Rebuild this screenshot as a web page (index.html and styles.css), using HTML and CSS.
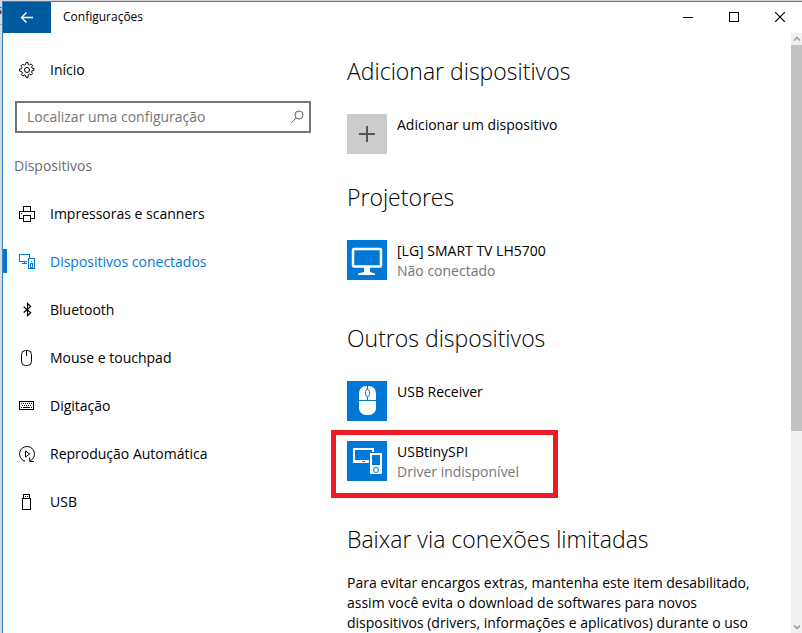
FILE: index.html
```html
<!DOCTYPE html>
<html lang="pt-BR">
<head>
    <meta charset="UTF-8">
    <meta name="viewport" content="width=device-width, initial-scale=1.0">
    <title>Configurações</title>
    <link rel="stylesheet" href="styles.css">
</head>
<body>
    <div class="behind" aria-hidden="true"><span>s</span></div>
    <div class="window">
        <header class="titlebar">
            <button class="back" type="button" aria-label="Voltar">
                <svg width="14" height="12" viewBox="0 0 14 12"><path stroke-width="1.4" d="M13 5.500H1.500M6.500.5l-5 5 5 5"/></svg>
            </button>
            <h1 class="window-title">Configurações</h1>
            <div class="window-buttons">
                <button type="button" aria-label="Minimizar">
                    <svg width="10" height="10" viewBox="0 0 10 10" shape-rendering="crispEdges"><path d="M0 5.500h10"/></svg>
                </button>
                <button type="button" aria-label="Maximizar">
                    <svg width="10" height="10" viewBox="0 0 10 10" shape-rendering="crispEdges"><path d="M.5.5h9v9h-9z"/></svg>
                </button>
                <button type="button" aria-label="Fechar">
                    <svg width="10" height="10" viewBox="0 0 10 10"><path stroke-width="1.200" d="M0 0l10 10M10 0L0 10"/></svg>
                </button>
            </div>
        </header>
        <div class="content">
            <nav class="sidebar">
                <a class="nav-item" href="#">
                    <svg class="icon" viewBox="0 0 16 16">
                        <path d="M6.700 2.400L7 .6h2l.3 1.800 1.300.6 1.500-1.100 1.500 1.500-1.100 1.500.6 1.300 1.800.3v2l-1.800.3-.6 1.300 1.100 1.500-1.500 1.500-1.500-1.100-1.300.6L9 15.400H7l-.3-1.800-1.300-.6-1.500 1.100-1.500-1.500 1.100-1.500-.6-1.300L.6 9V7l1.800-.3L3 5.400 1.900 3.900l1.500-1.500L5.400 3z"/>
                        <circle cx="8" cy="8" r="2.500"/>
                    </svg>
                    Início
                </a>
                <form class="search">
                    <input type="text" aria-label="Localizar uma configuração" placeholder="Localizar uma configuração">
                    <svg width="14" height="14" viewBox="0 0 14 14"><circle cx="9" cy="5" r="4"/><path d="M6 8l-4.500 4.500"/></svg>
                </form>
                <h2 class="nav-heading">Dispositivos</h2>
                <a class="nav-item" href="#">
                    <svg class="icon" viewBox="0 0 16 16" shape-rendering="crispEdges">
                        <path d="M4.500 5V.5h7V5M4 12.500H.5v-7h15v7H12M4.500 9.500h7v6h-7zM2 7.500h1"/>
                    </svg>
                    Impressoras e scanners
                </a>
                <a class="nav-item active" href="#">
                    <svg class="icon" viewBox="0 0 16 16" shape-rendering="crispEdges">
                        <path d="M8 7.500H.5v-7h10V4M3 9.500h5M5.500 8v1.500M9.500 4.500h6v10h-6z"/>
                        <path d="M12 7.500h1M11.500 9v4h2V9z"/>
                    </svg>
                    Dispositivos conectados
                </a>
                <a class="nav-item" href="#">
                    <svg class="icon" viewBox="0 0 16 16"><path stroke-width="1.200" d="M4.700 4.700l7 6-3.200 3V1.500l3.200 3-7 6"/></svg>
                    Bluetooth
                </a>
                <a class="nav-item" href="#">
                    <svg class="icon" viewBox="0 0 16 16"><rect x="2.500" y=".5" width="10" height="15" rx="4"/><path d="M7.500 1v5"/></svg>
                    Mouse e touchpad
                </a>
                <a class="nav-item" href="#">
                    <svg class="icon" viewBox="0 0 16 16" shape-rendering="crispEdges">
                        <path d="M.5 3.500h14v8H.5z"/>
                        <path stroke-dasharray="1 1" d="M2 5.500h11M3 7.500h10"/>
                        <path d="M2 9.500h1M4 9.500h7M12 9.500h1"/>
                    </svg>
                    Digitação
                </a>
                <a class="nav-item" href="#">
                    <svg class="icon" viewBox="0 0 16 16">
                        <path d="M6 15.200A7.500 7.500 0 1 1 14 12.500L11 15.300M10.700 11.500v4h4M6.500 5v6l4.200-3z"/>
                    </svg>
                    Reprodução Automática
                </a>
                <a class="nav-item" href="#">
                    <svg class="icon" viewBox="0 0 16 16" shape-rendering="crispEdges">
                        <path d="M4.500 4V.5h6V4M3.500 4.500h8v11h-8zM6 2.500h1M8 2.500h1"/>
                    </svg>
                    USB
                </a>
            </nav>
            <main class="main">
                <section>
                    <h2>Adicionar dispositivos</h2>
                    <button class="device" type="button">
                        <span class="tile tile-add">
                            <svg width="40" height="40" viewBox="0 0 40 40" shape-rendering="crispEdges"><path stroke-width="2" d="M12 20h16M20 12v16"/></svg>
                        </span>
                        <span class="device-name">Adicionar um dispositivo</span>
                    </button>
                </section>
                <section>
                    <h2>Projetores</h2>
                    <button class="device" type="button">
                        <span class="tile">
                            <svg width="40" height="40" viewBox="0 0 40 40">
                                <rect x="6" y="9" width="28" height="17.500" rx="1" fill="none" stroke="#fff" stroke-width="2.500"/>
                                <path fill="#fff" d="M17 27h6v5l5 1.500V35H11v-1.500l6-1.500z"/>
                            </svg>
                        </span>
                        <span class="device-name">[LG] SMART TV LH5700<small>Não conectado</small></span>
                    </button>
                </section>
                <section>
                    <h2>Outros dispositivos</h2>
                    <button class="device" type="button">
                        <span class="tile">
                            <svg width="40" height="40" viewBox="0 0 40 40">
                                <rect x="12" y="5" width="17" height="29" rx="7" fill="#fff"/>
                                <g fill="none" stroke="#0078d7">
                                    <path d="M12 19.500h17M20.500 5v3M20.500 16v3.500"/>
                                    <rect x="18.500" y="8.500" width="4" height="7" rx="2"/>
                                </g>
                            </svg>
                        </span>
                        <span class="device-name">USB Receiver</span>
                    </button>
                    <button class="device highlighted" type="button">
                        <span class="tile">
                            <svg width="40" height="40" viewBox="0 0 40 40">
                                <path fill="none" stroke="#fff" stroke-width="2" d="M22 20H7V8h19v3"/>
                                <path fill="#fff" d="M6 19h16v3H6zM23 12h12v21H23z"/>
                                <path fill="#0078d7" d="M25 14h8v10h-8zM15 20h3v1h-3z"/>
                                <circle cx="29" cy="29" r="2.500" fill="none" stroke="#0078d7"/>
                            </svg>
                        </span>
                        <span class="device-name">USBtinySPI<small>Driver indisponível</small></span>
                    </button>
                </section>
                <section>
                    <h2>Baixar via conexões limitadas</h2>
                    <p>Para evitar encargos extras, mantenha este item desabilitado, assim você evita o download de softwares para novos dispositivos (drivers, informações e aplicativos) durante o uso</p>
                </section>
            </main>
            <div class="scrollbar" aria-hidden="true">
                <svg width="12" height="12" viewBox="0 0 12 12"><path stroke-width="1.500" d="M3 7.500l3-3 3 3"/></svg>
                <div class="track"><div class="thumb"></div></div>
                <svg width="12" height="12" viewBox="0 0 12 12"><path stroke-width="1.500" d="M3 4.500l3 3 3-3"/></svg>
            </div>
        </div>
    </div>
</body>
</html>
```

FILE: styles.css
```css
*,
*::after {
    box-sizing: border-box;
}
body {
    margin: 0;
    height: 100vh;
    display: flex;
    overflow: hidden;
    background-color: #d4d4d4;
    font-family: "Open Sans", "Noto Sans", sans-serif;
    font-size: 14px;
    line-height: 20px;
    color: #000;
}
h1,
h2,
p {
    margin: 0;
    font-weight: 400;
}
button {
    padding: 0;
    border: none;
    background: none;
    font: inherit;
    color: inherit;
    text-align: left;
}
svg {
    display: block;
    flex: none;
    fill: none;
    stroke: currentColor;
}
.tile svg [fill="#fff"],
.tile svg path[fill="#0078d7"] {
    stroke: none;
}

/* strip of the window underneath */
.behind {
    width: 2px;
    overflow: hidden;
    background-color: #dadada;
    font-size: 12px;
}
.behind span {
    display: block;
    height: 25px;
    border-bottom: 1px solid #aaa;
    direction: rtl;
}

.window {
    flex: 1;
    min-width: 0;
    margin-top: 1px;
    display: flex;
    flex-direction: column;
    border-top: 1px solid #2f86c9;
    border-left: 1px solid #2f86c9;
    background-color: #fff;
}
.titlebar {
    display: flex;
    align-items: stretch;
    height: 31px;
    flex: none;
}
.back {
    width: 48px;
    display: flex;
    align-items: center;
    justify-content: center;
    background-color: #005a9e;
    color: #fff;
}
.window-title {
    flex: 1;
    padding-left: 12px;
    font-size: 12px;
    line-height: 30px;
}
.window-buttons {
    display: flex;
    margin-right: -1px;
    padding-bottom: 1px;
}
.window-buttons button {
    width: 46px;
    display: flex;
    align-items: center;
    justify-content: center;
}

.content {
    flex: 1;
    min-height: 0;
    display: flex;
}
.sidebar {
    width: 308px;
    flex: none;
    padding-top: 13px;
}
.nav-item {
    display: flex;
    align-items: center;
    gap: 15px;
    height: 48px;
    padding: 0 0 1px 16px;
    color: inherit;
    text-decoration: none;
}
.icon {
    width: 16px;
    height: 16px;
}
.nav-item.active {
    color: #0078d7;
    background: linear-gradient(#0078d7, #0078d7) left 11px / 4px 24px no-repeat;
}
.search {
    display: flex;
    align-items: center;
    height: 32px;
    margin: 7px 0 23px 12px;
    padding: 0 5px 0 10px;
    border: 2px solid #767676;
    color: #666;
}
.search input {
    flex: 1;
    min-width: 0;
    padding: 0;
    border: none;
    outline: none;
    background: none;
    font: inherit;
    color: #000;
}
.search input::placeholder {
    color: #767676;
    opacity: 1;
}
.nav-heading {
    margin-bottom: 14px;
    padding-left: 11px;
    font-size: 14px;
    color: #6d6d6d;
}

.main {
    flex: 1;
    min-width: 0;
    padding: 22px 32px 0 36px;
    overflow: hidden;
}
.main section {
    margin-bottom: 42px;
}
.main section:first-child {
    margin-bottom: 27px;
}
.main h2 {
    margin-bottom: 27px;
    font-size: 23px;
    font-weight: 300;
    line-height: 32px;
}
.main p {
    margin-top: -9px;
}
.device {
    position: relative;
    display: flex;
    gap: 10px;
}
.device + .device {
    margin-top: 20px;
}
.tile {
    width: 40px;
    height: 40px;
    flex: none;
    background-color: #0078d7;
}
.tile-add {
    background-color: #ccc;
    color: #555;
}
/* the two text lines stay within the tile's height */
.device-name {
    height: 40px;
    padding-top: 1px;
    white-space: nowrap;
}
.device-name small {
    display: block;
    font-size: 14px;
    color: #767676;
}
.highlighted::after {
    content: "";
    position: absolute;
    top: -11px;
    bottom: -17px;
    left: -16px;
    width: 227px;
    border: 5px solid #ed1c24;
}

.scrollbar {
    width: 11px;
    flex: none;
    display: flex;
    flex-direction: column;
    overflow: hidden;
    background-color: #f0f0f0;
    color: #999;
}
.track {
    flex: 1;
}
.thumb {
    height: 67%;
    background-color: #c2c2c2;
}
```
